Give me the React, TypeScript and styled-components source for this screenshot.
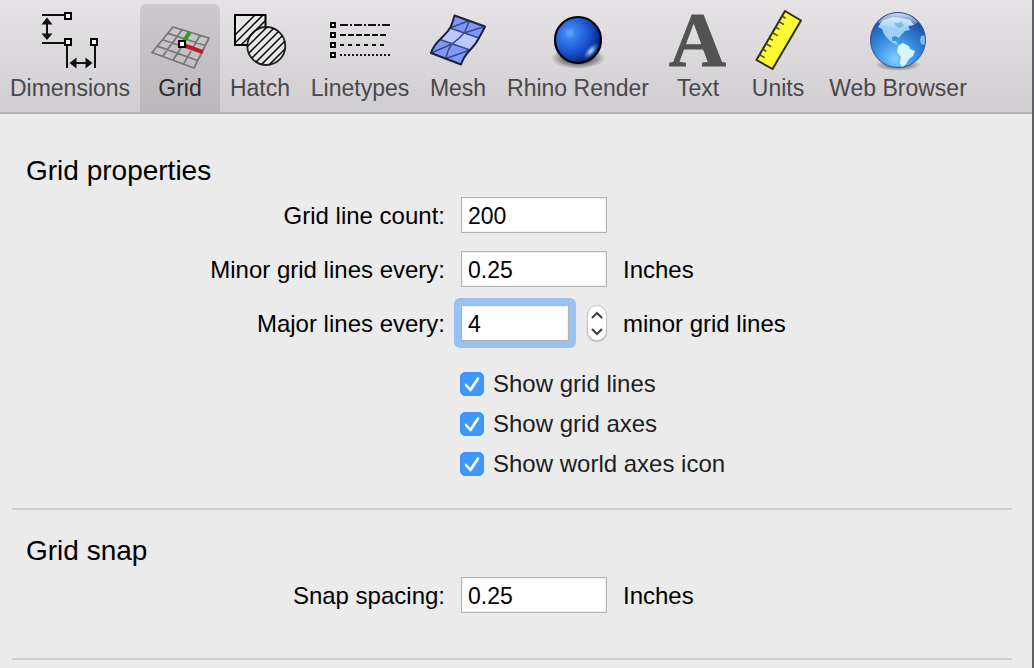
import React, { useState } from "react";
import styled, { createGlobalStyle } from "styled-components";

const GlobalStyle = createGlobalStyle`
  *, *::before, *::after { box-sizing: border-box; }
  body {
    margin: 0;
    background: #ebebeb;
    font-family: "Liberation Sans", Arial, sans-serif;
    color: #000;
  }
  button, input { font: inherit; color: inherit; }
`;

const Window = styled.div`
  min-height: 100vh;
  overflow: hidden;
  background: #ebebeb;
  border-right: 2px solid #5a626a;
`;

const Toolbar = styled.nav`
  display: flex;
  align-items: flex-end;
  height: 114px;
  background: linear-gradient(#e5e3e5, #d0ced0);
  border-bottom: 2px solid #b2b1b2;
`;

const ToolButton = styled.button<{ $width: number; $active: boolean }>`
  flex: 0 0 ${(p) => p.$width}px;
  min-width: 0;
  display: flex;
  flex-direction: column;
  align-items: center;
  height: 108px;
  padding: 0 0 8px;
  border: 0;
  border-radius: 7px 7px 0 0;
  background: ${(p) => (p.$active ? "linear-gradient(#cbc9cb, #bab8ba)" : "transparent")};
  color: ${(p) => (p.$active ? "#2b2a2b" : "#4a484a")};
  font-size: 23px;
  line-height: 32px;
  white-space: nowrap;
`;

const ToolIcon = styled.svg`
  flex: none;
  width: 80px;
  height: 68px;
  overflow: visible;
`;

const Section = styled.section`
  margin: 0 20px 0 12px;
  padding: 25px 0 45px 14px;
  border-bottom: 2px solid #d2d2d2;

  &:first-child {
    padding: 41px 0 32px 14px;
  }
`;

const Heading = styled.h2`
  margin: 0 0 10px;
  font-size: 28px;
  font-weight: 400;
  line-height: 32px;
`;

const Fields = styled.div`
  display: grid;
  gap: 18px;
`;

const FieldRow = styled.div`
  display: grid;
  grid-template-columns: minmax(0, 419px) 146px auto;
  column-gap: 16px;
  align-items: center;
  height: 36px;
  font-size: 24px;
`;

const FieldLabel = styled.label`
  padding-top: 2px;
  text-align: right;
  white-space: nowrap;
`;

const FieldControl = styled.div`
  display: flex;
  align-items: center;
  justify-content: space-between;
`;

const Unit = styled.span`
  padding-top: 2px;
  white-space: nowrap;
`;

const TextBox = styled.input`
  width: 100%;
  height: 36px;
  padding: 2px 6px 0;
  border: 1px solid #b3b3b3;
  border-radius: 0;
  background: #fff;
  box-shadow: inset 0 0 0 1px #f3f3f3;
  font-size: 23px;
  outline: none;
`;

const FocusRing = styled.div`
  width: 122px;
  margin: -7px;
  padding: 7px;
  border-radius: 6px;
  background: #97c2f2;
`;

const Stepper = styled.div`
  display: flex;
  flex-direction: column;
  width: 20px;
  height: 36px;
  overflow: hidden;
  border-radius: 10px;
  background: #fff;
  border: 1px solid #c4c4c4;
  box-shadow: 0 1px 1px #b0b0b0;
`;

const StepButton = styled.button`
  flex: 1;
  display: flex;
  align-items: center;
  justify-content: center;
  padding: 0;
  border: 0;
  background: transparent;
`;

const Checks = styled.div`
  display: grid;
  gap: 16px;
  justify-items: start;
  margin-top: 31px;
  padding-left: 434px;
`;

const CheckLabel = styled.label`
  display: flex;
  align-items: center;
  gap: 9px;
  height: 24px;
  color: #1e1e1e;
  font-size: 24px;
  white-space: nowrap;
`;

const CheckSlot = styled.span`
  display: grid;
  width: 24px;
  height: 24px;

  > * { grid-area: 1 / 1; }
`;

const CheckBox = styled.input`
  appearance: none;
  width: 24px;
  height: 24px;
  margin: 0;
  border: 1px solid #c0c0c0;
  border-radius: 5px;
  background: #fff;

  &:checked {
    border-color: #3b93f5;
    background: #3f99fa;
  }
  &:not(:checked) + svg { visibility: hidden; }
`;

const CheckMark = styled.svg`
  width: 24px;
  height: 24px;
  pointer-events: none;
`;

const DimensionsIcon = () => (
  <ToolIcon viewBox="30 4 80 68" aria-hidden="true">
    <g stroke="#111" strokeWidth="2" fill="none">
      <path d="M42 15H65M42 43H65M67 45V68M95 45V68" />
      <path d="M47 21V37M73 63H89" />
    </g>
    <path d="M47 17.500L52.500 24.500H41.500ZM47 40L52.500 33.500H41.500ZM69.500 63L76.500 57.500V68.500ZM92.500 63L85.500 57.500V68.500Z" fill="#111" />
    <g fill="#fff" stroke="#000" strokeWidth="2">
      <rect x="65" y="13" width="6" height="6" />
      <rect x="65" y="39" width="6" height="6" />
      <rect x="91" y="39" width="6" height="6" />
    </g>
  </ToolIcon>
);

const corners = { tl: [173, 27], tr: [209, 38], br: [194, 68], bl: [152, 52.5] };
const mix = (a: number[], b: number[], t: number) => [a[0] + (b[0] - a[0]) * t, a[1] + (b[1] - a[1]) * t];
const planeLines = [0, 0.25, 0.5, 0.75, 1]
  .map((t) => {
    const rows = [mix(corners.tl, corners.bl, t), mix(corners.tr, corners.br, t)];
    const cols = [mix(corners.tl, corners.tr, t), mix(corners.bl, corners.br, t)];
    return `M${rows[0]}L${rows[1]}M${cols[0]}L${cols[1]}`;
  })
  .join("");

const GridIcon = () => (
  <ToolIcon viewBox="140 4 80 68" aria-hidden="true">
    <path d={planeLines} stroke="#777577" strokeWidth="1.700" fill="none" strokeLinecap="round" />
    <path d="M182 44L189.500 32" stroke="#27a01f" strokeWidth="3.500" />
    <path d="M184 45L203 52" stroke="#c9141d" strokeWidth="3.500" />
    <rect x="179" y="41" width="6" height="6" fill="#fff" stroke="#000" strokeWidth="2" />
  </ToolIcon>
);

const hatchLines = Array.from({ length: 12 }, (_, i) => `M${200 + i * 8} 70L${270 + i * 8} 0`).join("");

const HatchIcon = () => (
  <ToolIcon viewBox="220 4 80 68" aria-hidden="true">
    <defs>
      <clipPath id="hatch-shape">
        <rect x="235" y="15" width="30" height="30" />
        <circle cx="266" cy="46" r="19" />
      </clipPath>
    </defs>
    <rect x="235" y="15" width="30" height="30" fill="#e8e7e8" />
    <path d="M247 45H235V15H265.500V27" fill="none" stroke="#000" strokeWidth="2" />
    <circle cx="266.300" cy="46" r="19" fill="#e8e7e8" stroke="#222" strokeWidth="1.800" />
    <path d={hatchLines} clipPath="url(#hatch-shape)" stroke="#000" strokeWidth="1.500" />
  </ToolIcon>
);

const LinetypesIcon = () => (
  <ToolIcon viewBox="320 4 80 68" aria-hidden="true">
    <g fill="#fff" stroke="#000" strokeWidth="2">
      <rect x="331" y="23" width="4" height="4" />
      <rect x="331" y="33" width="4" height="4" />
      <rect x="331" y="43" width="4" height="4" />
      <rect x="331" y="53" width="4" height="4" />
    </g>
    <g stroke="#111" strokeWidth="2">
      <path d="M340 25H390" strokeDasharray="8 2 2 2" />
      <path d="M340 35H386" strokeDasharray="6 2" />
      <path d="M340 45H384" strokeDasharray="4 4" />
      <path d="M340 55H390" strokeDasharray="2 2" />
    </g>
  </ToolIcon>
);

const meshOutline =
  "M454.500 15.500C453 21 452 25 450 28C447 33 444 35 441 38.500C436 43 433 47 431 53L461 64.500C463 58 466 54 471 49C475 45 477 42 479 38C481 34 483 31 485 26.500Z";

const MeshIcon = () => (
  <ToolIcon viewBox="418 4 80 68" aria-hidden="true">
    <path d={meshOutline} fill="#7f97f8" />
    <path d="M450 28L479 38C477 42 475 45 471 49L470 50L440 39.500L441 38.500C444 35 447 33 450 28Z" fill="#bcc8ff" />
    <g fill="none" stroke="#3c4a82" strokeWidth="1.500">
      <path d="M450 28L479 38M440 39.500L470 50M469.500 20.500C467 27 466 30 464 33C459 39 456 41 452 44C448 49 447 53 446 58.500" />
      <path d="M450 28L469.500 20.500M464 33L485 26.500M431 53L452 44M446 58.500L470 50" />
    </g>
    <path d={meshOutline} fill="none" stroke="#1b2140" strokeWidth="2" strokeLinejoin="round" />
  </ToolIcon>
);

const SphereIcon = () => (
  <ToolIcon viewBox="538 4 80 68" aria-hidden="true">
    <defs>
      <radialGradient id="sphere-body" cx="0.320" cy="0.350" r="0.740">
        <stop offset="0" stopColor="#6ea8fd" />
        <stop offset="0.180" stopColor="#3a80f3" />
        <stop offset="0.600" stopColor="#1650cc" />
        <stop offset="1" stopColor="#03166c" />
      </radialGradient>
      <radialGradient id="sphere-shadow">
        <stop offset="0.500" stopColor="#000" stopOpacity="0.500" />
        <stop offset="1" stopColor="#000" stopOpacity="0" />
      </radialGradient>
      <radialGradient id="sphere-glint">
        <stop offset="0" stopColor="#d5f0ff" />
        <stop offset="1" stopColor="#3f85dd" stopOpacity="0" />
      </radialGradient>
    </defs>
    <ellipse cx="578" cy="58" rx="27" ry="11" fill="url(#sphere-shadow)" />
    <circle cx="578" cy="40" r="23" fill="url(#sphere-body)" stroke="#000" strokeWidth="2.200" />
    <ellipse cx="591" cy="51" rx="11" ry="5" transform="rotate(-48 591 51)" fill="url(#sphere-glint)" />
  </ToolIcon>
);

const TextIcon = () => (
  <ToolIcon viewBox="658 4 80 68" aria-hidden="true">
    <text x="697.500" y="66" textAnchor="middle" fontFamily="Liberation Serif, serif" fontWeight="700" fontSize="79" fill="#535353" stroke="#535353" strokeWidth="1">
      A
    </text>
  </ToolIcon>
);

const rulerTicks = Array.from({ length: 8 }, (_, i) => i + 1)
  .map((i) => `M${785 - i * 3.22} ${10.5 + i * 5.5}l${i % 2 ? "4 2.300" : "5.500 3.200"}`)
  .join("");

const UnitsIcon = () => (
  <ToolIcon viewBox="738 4 80 68" aria-hidden="true">
    <path d="M785 11L801 20.500L772.500 69L756.500 60Z" fill="#fdf935" stroke="#2e2d14" strokeWidth="2" strokeLinejoin="round" />
    <path d={rulerTicks} stroke="#4c4a12" strokeWidth="1.500" fill="none" />
  </ToolIcon>
);

const GlobeIcon = () => (
  <ToolIcon viewBox="858 4 80 68" aria-hidden="true">
    <defs>
      <radialGradient id="globe-sea" cx="0.450" cy="0.850" r="0.850">
        <stop offset="0" stopColor="#7fcfff" />
        <stop offset="0.450" stopColor="#3a90e0" />
        <stop offset="0.850" stopColor="#1f58b0" />
        <stop offset="1" stopColor="#243a92" />
      </radialGradient>
      <linearGradient id="globe-shine" x1="0" y1="0" x2="0" y2="1">
        <stop offset="0" stopColor="#fff" stopOpacity="0.950" />
        <stop offset="1" stopColor="#fff" stopOpacity="0.100" />
      </linearGradient>
      <radialGradient id="globe-shadow">
        <stop offset="0.500" stopColor="#000" stopOpacity="0.350" />
        <stop offset="1" stopColor="#000" stopOpacity="0" />
      </radialGradient>
      <clipPath id="globe-disc">
        <circle cx="898" cy="40" r="27" />
      </clipPath>
    </defs>
    <ellipse cx="898" cy="65" rx="23" ry="6" fill="url(#globe-shadow)" />
    <circle cx="898" cy="40" r="27.500" fill="url(#globe-sea)" stroke="#34508f" strokeWidth="1" />
    <g clipPath="url(#globe-disc)">
      <path d="M878 27L883 20L893 17L901 18L910 20L914 25L908 26L910 30L905 31L901 35L899 38L895 36L892 37L892 41L896 41L898 45L893 43L888 39L884 34L882 29Z" fill="#9dd1f5" />
      <path d="M894 22L898 23L902 21L904 26L899 28L895 25Z" fill="#5fa3dc" />
      <path d="M898 46L903 43L909 46L910 49L915 51L913 56L909 59L906 64L902 68L900 63L901 57L897 52Z" fill="#d8f5ff" />
      <path d="M921 36L926 35V46L921 44L920 40Z" fill="#7dbdf0" />
      <ellipse cx="898" cy="19" rx="21" ry="9" fill="url(#globe-shine)" />
    </g>
  </ToolIcon>
);

const tools = [
  { name: "Dimensions", width: 140, Icon: DimensionsIcon },
  { name: "Grid", width: 80, Icon: GridIcon },
  { name: "Hatch", width: 80, Icon: HatchIcon },
  { name: "Linetypes", width: 120, Icon: LinetypesIcon },
  { name: "Mesh", width: 76, Icon: MeshIcon },
  { name: "Rhino Render", width: 164, Icon: SphereIcon },
  { name: "Text", width: 76, Icon: TextIcon },
  { name: "Units", width: 84, Icon: UnitsIcon },
  { name: "Web Browser", width: 156, Icon: GlobeIcon },
];

const Chevron = ({ d }: { d: string }) => (
  <svg width="12" height="8" viewBox="0 0 12 8" aria-hidden="true">
    <path d={d} fill="none" stroke="#444" strokeWidth="2.200" />
  </svg>
);

const Check = ({ label }: { label: string }) => (
  <CheckLabel>
    <CheckSlot>
      <CheckBox type="checkbox" defaultChecked />
      <CheckMark viewBox="0 0 24 24" aria-hidden="true">
        <path d="M6 13L10.500 18L18 6.500" fill="none" stroke="#fff" strokeWidth="2.600" strokeLinecap="round" strokeLinejoin="round" />
      </CheckMark>
    </CheckSlot>
    {label}
  </CheckLabel>
);

export default function App() {
  const [active, setActive] = useState("Grid");
  const [major, setMajor] = useState("4");
  const step = (by: number) => setMajor((value) => String(Math.max(1, (Number(value) || 0) + by)));

  return (
    <Window>
      <GlobalStyle />
      <Toolbar>
        {tools.map(({ name, width, Icon }) => (
          <ToolButton key={name} type="button" $width={width} $active={name === active} onClick={() => setActive(name)}>
            <Icon />
            {name}
          </ToolButton>
        ))}
      </Toolbar>
      <main>
        <Section>
          <Heading>Grid properties</Heading>
          <Fields>
            <FieldRow>
              <FieldLabel htmlFor="line-count">Grid line count:</FieldLabel>
              <TextBox id="line-count" defaultValue="200" />
            </FieldRow>
            <FieldRow>
              <FieldLabel htmlFor="minor-lines">Minor grid lines every:</FieldLabel>
              <TextBox id="minor-lines" defaultValue="0.25" />
              <Unit>Inches</Unit>
            </FieldRow>
            <FieldRow>
              <FieldLabel htmlFor="major-lines">Major lines every:</FieldLabel>
              <FieldControl>
                <FocusRing>
                  <TextBox id="major-lines" value={major} onChange={(e) => setMajor(e.target.value)} />
                </FocusRing>
                <Stepper>
                  <StepButton type="button" aria-label="Increase" onClick={() => step(1)}>
                    <Chevron d="M1 7L6 2L11 7" />
                  </StepButton>
                  <StepButton type="button" aria-label="Decrease" onClick={() => step(-1)}>
                    <Chevron d="M1 1L6 6L11 1" />
                  </StepButton>
                </Stepper>
              </FieldControl>
              <Unit>minor grid lines</Unit>
            </FieldRow>
          </Fields>
          <Checks>
            <Check label="Show grid lines" />
            <Check label="Show grid axes" />
            <Check label="Show world axes icon" />
          </Checks>
        </Section>
        <Section>
          <Heading>Grid snap</Heading>
          <FieldRow>
            <FieldLabel htmlFor="snap-spacing">Snap spacing:</FieldLabel>
            <TextBox id="snap-spacing" defaultValue="0.25" />
            <Unit>Inches</Unit>
          </FieldRow>
        </Section>
      </main>
    </Window>
  );
}
